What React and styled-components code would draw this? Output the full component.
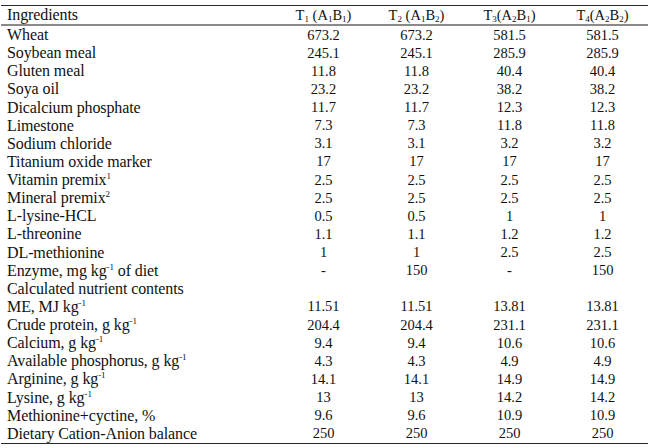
import React from 'react';
import styled, { createGlobalStyle } from 'styled-components';

const GlobalStyle = createGlobalStyle`
  html, body {
    margin: 0;
    padding: 0;
    background: #fff;
  }
`;

const Page = styled.div`
  width: 650px;
  height: 448px;
  padding: 5px 2px 0 1px;
  box-sizing: border-box;
  font-family: "Liberation Serif", "Times New Roman", serif;
  color: #111;
`;

const Table = styled.div`
  border-top: 1px solid #2a2a2a;
  border-bottom: 1px solid #2a2a2a;
`;

const Row = styled.div`
  display: grid;
  grid-template-columns: 276px repeat(4, 93px);
  height: ${(p) => (p.$head ? '18px' : '18.13px')};
  align-items: center;
  ${(p) => p.$head && 'border-bottom: 2px solid #8a8a8a;'}
`;

const Label = styled.div`
  padding-left: 6px;
  font-size: 16px;
  letter-spacing: -0.1px;
  white-space: nowrap;
`;

const Cell = styled.div`
  text-align: center;
  font-size: 14.5px;
  white-space: nowrap;
`;

const Sup = styled.sup`
  font-size: 9px;
  vertical-align: 6px;
  line-height: 0;
`;

const Sub = styled.sub`
  font-size: 9px;
  vertical-align: -2px;
  line-height: 0;
`;

const kg = (
  <>
    kg<Sup>-1</Sup>
  </>
);

const rows = [
  ['Wheat', '673.2', '673.2', '581.5', '581.5'],
  ['Soybean meal', '245.1', '245.1', '285.9', '285.9'],
  ['Gluten meal', '11.8', '11.8', '40.4', '40.4'],
  ['Soya oil', '23.2', '23.2', '38.2', '38.2'],
  ['Dicalcium phosphate', '11.7', '11.7', '12.3', '12.3'],
  ['Limestone', '7.3', '7.3', '11.8', '11.8'],
  ['Sodium chloride', '3.1', '3.1', '3.2', '3.2'],
  ['Titanium oxide marker', '17', '17', '17', '17'],
  [<>Vitamin premix<Sup>1</Sup></>, '2.5', '2.5', '2.5', '2.5'],
  [<>Mineral premix<Sup>2</Sup></>, '2.5', '2.5', '2.5', '2.5'],
  ['L-lysine-HCL', '0.5', '0.5', '1', '1'],
  ['L-threonine', '1.1', '1.1', '1.2', '1.2'],
  ['DL-methionine', '1', '1', '2.5', '2.5'],
  [<>Enzyme, mg {kg} of diet</>, '-', '150', '-', '150'],
  ['Calculated nutrient contents', '', '', '', ''],
  [<>ME, MJ {kg}</>, '11.51', '11.51', '13.81', '13.81'],
  [<>Crude protein, g {kg}</>, '204.4', '204.4', '231.1', '231.1'],
  [<>Calcium, g {kg}</>, '9.4', '9.4', '10.6', '10.6'],
  [<>Available phosphorus, g {kg}</>, '4.3', '4.3', '4.9', '4.9'],
  [<>Arginine, g {kg}</>, '14.1', '14.1', '14.9', '14.9'],
  [<>Lysine, g {kg}</>, '13', '13', '14.2', '14.2'],
  ['Methionine+cyctine, %', '9.6', '9.6', '10.9', '10.9'],
  ['Dietary Cation-Anion balance', '250', '250', '250', '250'],
];

const Treat = ({ t, a, b, gap }) => (
  <>
    T<Sub>{t}</Sub>
    {gap ? ' ' : ''}(A<Sub>{a}</Sub>B<Sub>{b}</Sub>)
  </>
);

export default function App() {
  return (
    <Page>
      <GlobalStyle />
      <Table>
        <Row $head>
          <Label>Ingredients</Label>
          <Cell><Treat t="1" a="1" b="1" gap /></Cell>
          <Cell><Treat t="2" a="1" b="2" gap /></Cell>
          <Cell><Treat t="3" a="2" b="1" /></Cell>
          <Cell><Treat t="4" a="2" b="2" /></Cell>
        </Row>
        {rows.map(([label, ...vals], i) => (
          <Row key={i}>
            <Label>{label}</Label>
            {vals.map((v, j) => (
              <Cell key={j}>{v}</Cell>
            ))}
          </Row>
        ))}
      </Table>
    </Page>
  );
}
